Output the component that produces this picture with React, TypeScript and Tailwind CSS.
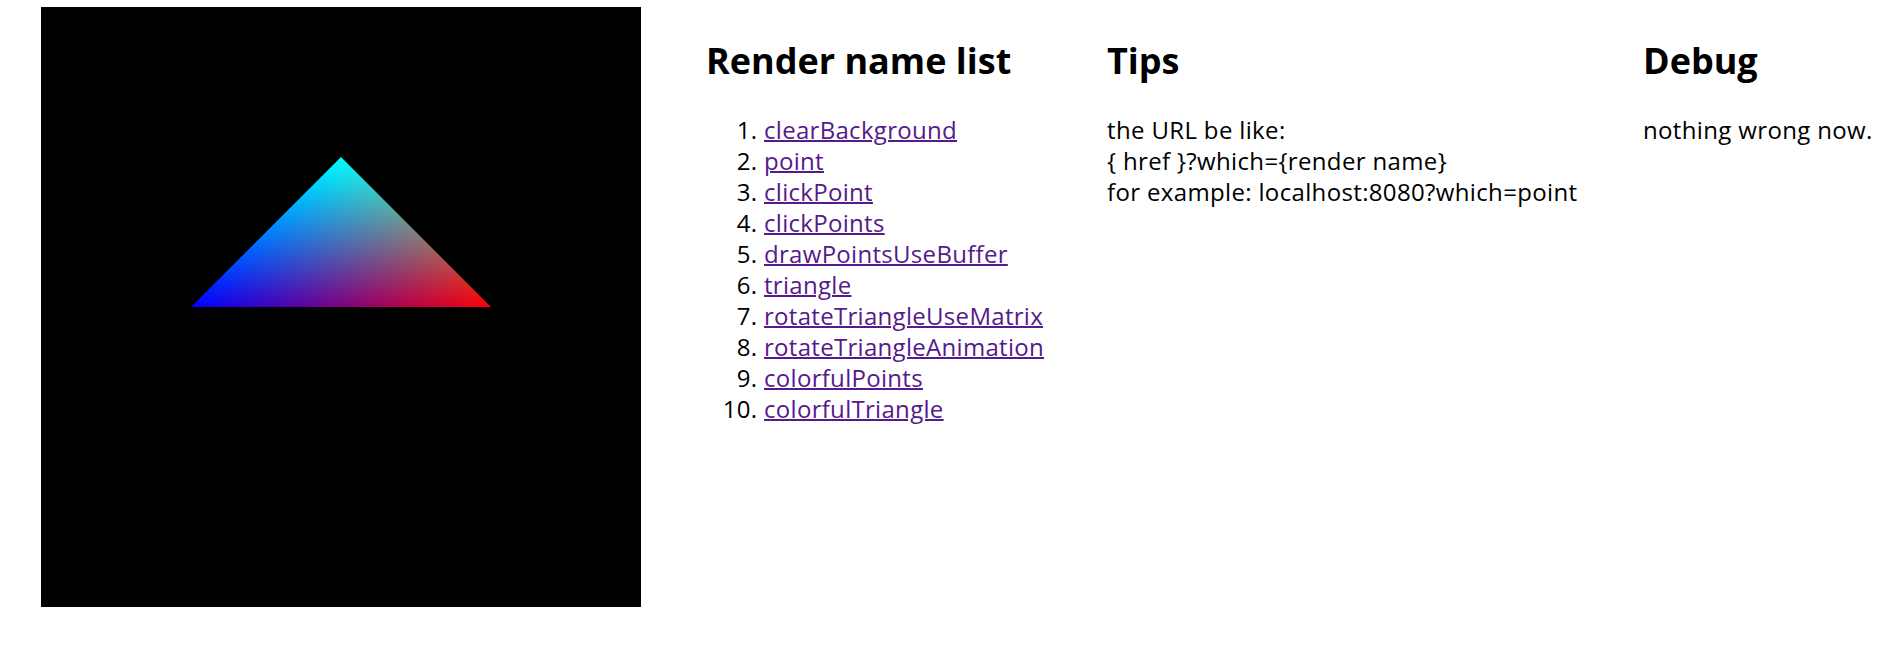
import React from "react";

const names = [
  "clearBackground",
  "point",
  "clickPoint",
  "clickPoints",
  "drawPointsUseBuffer",
  "triangle",
  "rotateTriangleUseMatrix",
  "rotateTriangleAnimation",
  "colorfulPoints",
  "colorfulTriangle",
];

function Canvas() {
  return (
    <svg width={600} height={600} viewBox="0 0 600 600" className="block shrink-0">
      <defs>
        <linearGradient id="gRB" gradientUnits="userSpaceOnUse" x1={300} y1={150} x2={450} y2={300}>
          <stop offset="0" stopColor="#0000ff" />
          <stop offset="1" stopColor="#ff0000" />
        </linearGradient>
        <linearGradient id="gG" gradientUnits="userSpaceOnUse" x1={0} y1={150} x2={0} y2={300}>
          <stop offset="0" stopColor="#00ff00" />
          <stop offset="1" stopColor="#000000" />
        </linearGradient>
      </defs>
      <rect x={0} y={0} width={600} height={600} fill="#000000" />
      <g style={{ isolation: "isolate" }}>
        <polygon points="300,150 150,300 450,300" fill="url(#gRB)" />
        <polygon points="300,150 150,300 450,300" fill="url(#gG)" className="mix-blend-screen" />
      </g>
    </svg>
  );
}

export default function App() {
  return (
    <div className="min-h-[651px] bg-white text-black font-['Open_Sans',sans-serif]">
      <div className="flex items-start pl-[41px] pt-[7px]">
        <Canvas />
        <div className="ml-[65px] w-[336px] shrink-0">
          <h2 className="mt-[30px] text-[36px] leading-[48px] font-bold whitespace-nowrap">Render name list</h2>
          <ol className="mt-[29px] list-decimal pl-[58px] text-[24px] leading-[31px] tracking-[0.3px]">
            {names.map((n) => (
              <li key={n} className="whitespace-nowrap">
                <a href="#" className="text-[#551a8b] underline decoration-2">
                  {n}
                </a>
              </li>
            ))}
          </ol>
        </div>
        <div className="ml-[65px] w-[470px] shrink-0">
          <h2 className="mt-[30px] text-[36px] leading-[48px] font-bold">Tips</h2>
          <div className="mt-[29px] text-[24px] leading-[31px] tracking-[0.35px] whitespace-nowrap">
            <div>the URL be like:</div>
            <div>{"{ href }?which={render name}"}</div>
            <div>for example: localhost:8080?which=point</div>
          </div>
        </div>
        <div className="ml-[66px] shrink-0">
          <h2 className="mt-[30px] text-[36px] leading-[48px] font-bold">Debug</h2>
          <div className="mt-[29px] text-[24px] leading-[31px] tracking-[0.35px] whitespace-nowrap">nothing wrong now.</div>
        </div>
      </div>
    </div>
  );
}
